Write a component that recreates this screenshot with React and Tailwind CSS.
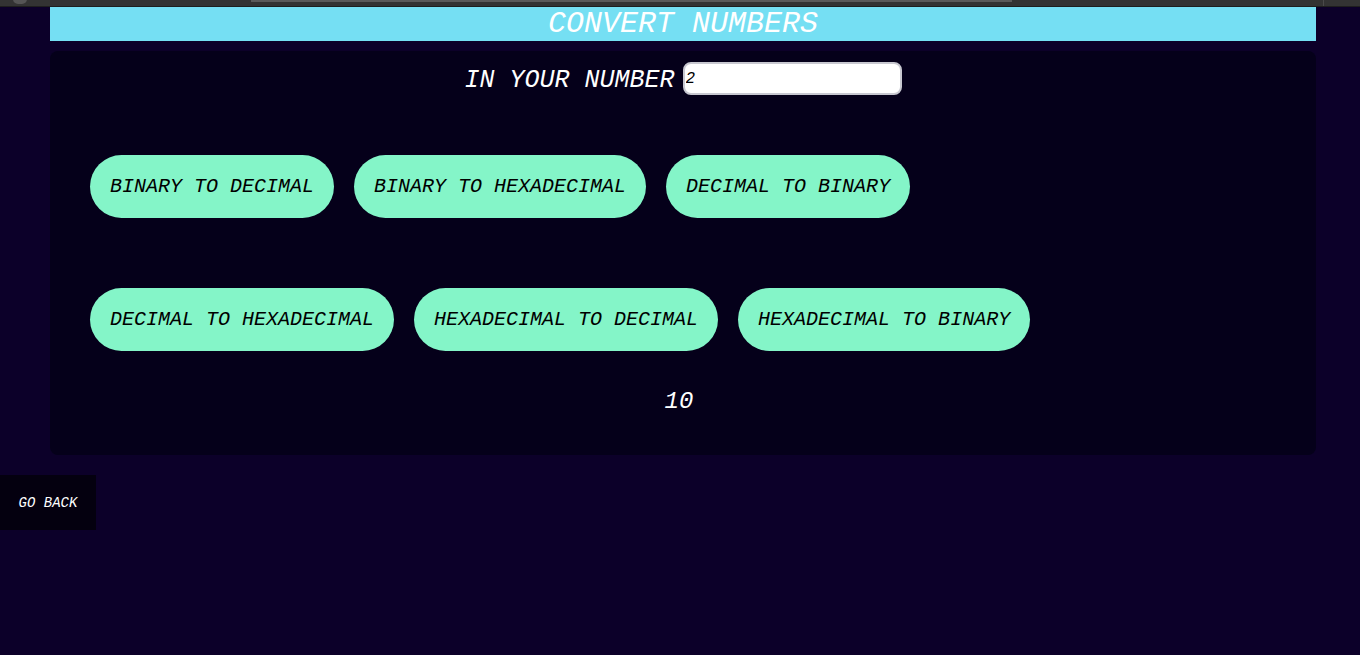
import React from "react";

const mono = { fontFamily: '"Liberation Mono", "Courier New", monospace' };

function Btn({ children }) {
  return (
    <button
      className="h-[63px] px-[20px] rounded-[32px] bg-[#84f5c8] text-black text-[20px] italic leading-none whitespace-nowrap"
      style={mono}
    >
      {children}
    </button>
  );
}

export default function App() {
  return (
    <div className="min-h-screen w-full bg-[#0c0029] flex flex-col" style={mono}>
      <div className="h-[7px] bg-[#333333] border-b border-[#1e1e1e] flex items-start">
        <div className="ml-[13px] mt-[-6px] w-[14px] h-[10px] rounded-full bg-[#555555]"></div>
        <div className="ml-[224px] h-[2px] w-[761px] bg-[#5a5a5a]"></div>
        <div className="ml-[311px] h-[6px] w-[1px] bg-[#4a4a4a]"></div>
      </div>
      <div className="ml-[50px] mr-[44px] h-[34px] bg-[#75dff3] flex items-center justify-center">
        <span className="text-white italic text-[30px] leading-none">CONVERT NUMBERS</span>
      </div>
      <div className="ml-[50px] mr-[44px] mt-[10px] rounded-[8px] bg-[#05001a] pt-[11px] pb-[39px] flex flex-col">
        <div className="flex items-center justify-center gap-[8px]">
          <span className="text-white italic text-[25px] leading-none mt-[3px]">IN YOUR NUMBER</span>
          <input
            defaultValue="2"
            className="w-[219px] h-[33px] rounded-[8px] bg-white border-2 border-[#c8c8d0] px-[1px] text-[16px] italic text-black outline-none"
            style={mono}
          />
        </div>
        <div className="flex gap-[20px] pl-[40px] mt-[60px]">
          <Btn>BINARY TO DECIMAL</Btn>
          <Btn>BINARY TO HEXADECIMAL</Btn>
          <Btn>DECIMAL TO BINARY</Btn>
        </div>
        <div className="flex gap-[20px] pl-[40px] mt-[70px]">
          <Btn>DECIMAL TO HEXADECIMAL</Btn>
          <Btn>HEXADECIMAL TO DECIMAL</Btn>
          <Btn>HEXADECIMAL TO BINARY</Btn>
        </div>
        <div className="mt-[37px] flex justify-center pr-[8px]">
          <span className="text-white italic text-[24px] leading-[28px]">10</span>
        </div>
      </div>
      <div className="mt-[20px]">
        <button
          className="w-[96px] h-[55px] bg-[#04000f] text-white italic text-[14px] leading-none"
          style={mono}
        >
          GO BACK
        </button>
      </div>
    </div>
  );
}
